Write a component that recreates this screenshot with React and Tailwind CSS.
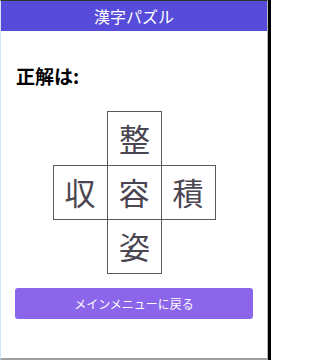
export default function App() {
  const cell =
    "w-[55px] h-[55px] border border-[#5a5a5a] flex items-center justify-center text-[31px] text-[#4a4550]";
  return (
    <div
      className="w-[271px] h-[360px] flex bg-black"
      style={{ fontFamily: '"Noto Sans CJK JP", "Noto Sans", sans-serif' }}
    >
      <div className="w-[268px] h-[360px] flex flex-col border-t border-t-[#333] border-l border-l-[#d3e3f7] border-r border-r-[#b8b8b8] border-b-2 border-b-[#a0a0a0] bg-white">
        <div className="h-[30px] bg-[#574bd9] flex items-center justify-center text-white text-[16px]">
          漢字パズル
        </div>
        <div className="px-[15px] pt-[33px] text-[19px] font-bold text-black leading-[24px]">
          正解は:
        </div>
        <div className="flex flex-col items-center mt-[23px]">
          <div className={cell + " ml-[1px]"}>整</div>
          <div className="flex -mt-[1px]">
            <div className={cell}>収</div>
            <div className={cell + " -ml-[1px]"}>容</div>
            <div className={cell + " -ml-[1px]"}>積</div>
          </div>
          <div className={cell + " -mt-[1px] ml-[1px]"}>姿</div>
        </div>
        <div className="px-[14px] mt-[14px]">
          <button className="w-full h-[31px] rounded-[3px] bg-[#8b66eb] text-white text-[12px] flex items-center justify-center">
            メインメニューに戻る
          </button>
        </div>
      </div>
    </div>
  );
}
